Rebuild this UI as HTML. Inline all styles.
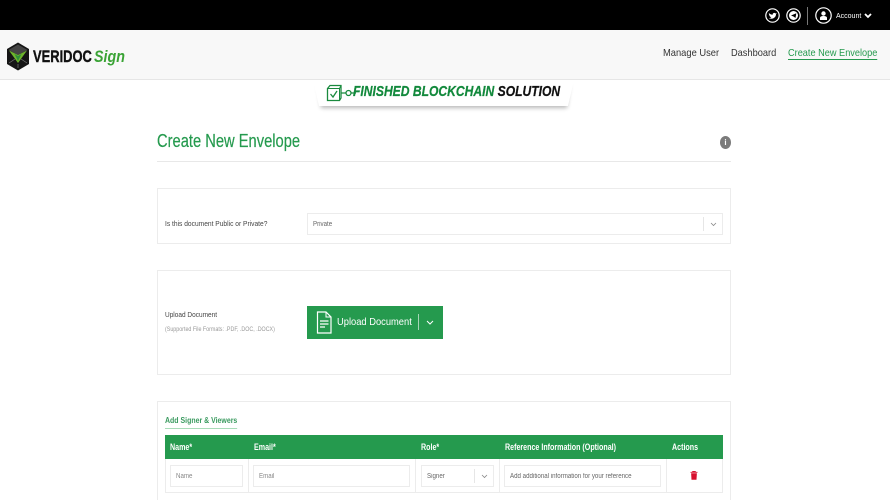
<!DOCTYPE html>
<html><head><meta charset="utf-8">
<style>
*{box-sizing:border-box}
html,body{margin:0;padding:0;width:890px;height:500px;overflow:hidden}
body{background:#fff;font-family:"Liberation Sans",sans-serif;color:#333}
#w{position:absolute;left:0;top:0;width:890px;height:500px;overflow:hidden}
.a{position:absolute;white-space:nowrap;transform-origin:0 0}
.box{position:absolute;border:1px solid #ececec;background:#fff}
.inp{position:absolute;border:1px solid #ececec;background:#fff}
.t{position:absolute;font-size:7px;line-height:10px;color:#666;white-space:nowrap;transform-origin:0 0;transform:scaleX(.88);margin-top:1px}
.th{position:absolute;top:436px;height:23px;line-height:22px;color:#fff;font-weight:bold;font-size:9px;white-space:nowrap;transform-origin:0 0;transform:scaleX(.79)}
</style></head><body><div id="w">
<div class="a" style="left:0;top:0;width:890px;height:30px;background:#000"></div>
<div class="a" style="left:0;top:30px;width:890px;height:50px;background:#f8f8f8;border-bottom:1px solid #e6e6e6"></div>

<svg class="a" style="left:765px;top:7px" width="110" height="18" viewBox="0 0 110 18">
<circle cx="7.5" cy="8.5" r="6.7" fill="none" stroke="#fff" stroke-width="1.2"/>
<path d="M3.8 6c1.6 1.3 2.7 1.7 3.8 1.7C7.6 6 9.600 5.300 10.600 6.500L11.800 6 11 7.300C11 10.500 7.500 13 3.800 11 5 11 5.800 10.700 6.300 10.200 5 10 4 8.500 3.800 6Z" fill="#fff"/>
<circle cx="28.500" cy="8.500" r="6.700" fill="none" stroke="#fff" stroke-width="1.200"/>
<circle cx="28.500" cy="8.500" r="4.500" fill="#fff"/>
<path d="M26 8.500 31.300 6.300 30.500 11 28.500 9.500Z" fill="#000"/>
<rect x="42" y="0" width="1" height="18" fill="#777"/>
<circle cx="58.500" cy="8.500" r="7.700" fill="none" stroke="#fff" stroke-width="1.200"/>
<circle cx="58.500" cy="6.500" r="2.200" fill="#fff"/>
<path d="M55 13V11C55 9.500 56.500 9 58.500 9S62 9.500 62 11V13Z" fill="#fff"/>
<path d="M100 7l3 3 3-3" fill="none" stroke="#fff" stroke-width="1.800"/>
</svg>
<div class="a" style="left:836px;top:13px;font-size:7px;line-height:8px;color:#fff">Account</div>

<svg class="a" style="left:6px;top:42px" width="24" height="29" viewBox="0 0 24 29">
<path d="M12 .5 23 7V22L12 28.500 1 22V7Z" fill="#161616"/>
<path d="M12 2.500 21.500 8 12 13 2.500 8Z" fill="#444"/>
<path d="M3 8.500 12 13 21 8.500 12 21Z" fill="#6fb52c"/>
<path d="M8.500 12 12 14 15.500 12 12 19Z" fill="#2f8f3a"/>
<path d="M3 21 9 17M21 21 15 17M12 26V22" stroke="#777" stroke-width=".7"/>
</svg>
<div class="a" style="left:33px;top:47px;font-size:17px;line-height:20px;font-weight:bold;color:#111;transform:scaleX(.76);-webkit-text-stroke:.4px #111">VERIDOC</div>
<div class="a" style="left:94px;top:47px;font-size:17px;line-height:20px;font-weight:bold;font-style:italic;color:#3aa335;transform:scaleX(.84)">Sign</div>

<div class="a" style="left:663px;top:47px;font-size:10.500px;line-height:12px;color:#333;transform:scaleX(.89)">Manage User</div>
<div class="a" style="left:731px;top:47px;font-size:10.500px;line-height:12px;color:#333;transform:scaleX(.88)">Dashboard</div>
<div class="a" style="left:788px;top:47px;font-size:10.500px;line-height:12px;color:#259a4e;border-bottom:1px solid #259a4e;transform:scaleX(.875)">Create New Envelope</div>

<svg class="a" style="left:310px;top:80px" width="270" height="34" viewBox="0 0 270 34">
<defs><filter id="s" x="-5%" y="-20%" width="110%" height="160%"><feGaussianBlur stdDeviation="2"/></filter></defs>
<path d="M8 4H260L257 28H11Z" fill="#000" opacity=".28" filter="url(#s)"/>
<path d="M3 0H264L258 26H9Z" fill="#fff"/>
</svg>
<svg class="a" style="left:326px;top:84px" width="32" height="18" viewBox="0 0 32 18">
<path d="M1.500 4.500 4 1.500H15V14L13.500 16.500H1.500Z" fill="none" stroke="#1a8a3e" stroke-width="1.300"/>
<path d="M1.500 4.500H13.500V16.500M13.500 4.500 15 1.500" fill="none" stroke="#1a8a3e" stroke-width="1"/>
<path d="M4.500 10 7 13 11 7" fill="none" stroke="#1a8a3e" stroke-width="1.300"/>
<path d="M15 9H20M25 9H30" stroke="#1a8a3e" stroke-width="1.300"/>
<circle cx="22.500" cy="9" r="2.500" fill="none" stroke="#1a8a3e" stroke-width="1.300"/>
</svg>
<div class="a" style="left:353px;top:84px;font-size:14.500px;line-height:17px;font-weight:bold;font-style:italic;color:#12893c;transform:scaleX(.835);-webkit-text-stroke:.25px">FINISHED BLOCKCHAIN <span style="color:#111">SOLUTION</span></div>

<div class="a" style="left:157px;top:130px;font-size:18.500px;line-height:21px;color:#259a4e;transform:scaleX(.795);-webkit-text-stroke:.2px #259a4e">Create New Envelope</div>
<div class="a" style="left:720px;top:136px;width:11px;height:13px;border-radius:50%;background:#7b7b7b;color:#fff;font-size:8px;font-weight:bold;line-height:13px;text-align:center">i</div>
<div class="a" style="left:157px;top:161px;width:574px;height:1px;background:#e8e8e8"></div>

<div class="box" style="left:157px;top:188px;width:574px;height:56px"></div>
<div class="a" style="left:165px;top:219px;font-size:7.500px;line-height:10px;color:#444;transform:scaleX(.887)">Is this document Public or Private?</div>
<div class="inp" style="left:307px;top:213px;width:416px;height:22px"></div>
<div class="t" style="left:313px;top:219px">Private</div>
<div class="a" style="left:703px;top:217px;width:1px;height:14px;background:#e6e6e6"></div>
<svg class="a" style="left:710px;top:222px" width="7" height="5"><path d="M1 1l2.500 2.500L6 1" fill="none" stroke="#888" stroke-width=".8"/></svg>

<div class="box" style="left:157px;top:270px;width:574px;height:105px"></div>
<div class="a" style="left:165px;top:310px;font-size:7.500px;line-height:10px;color:#444;transform:scaleX(.867)">Upload Document</div>
<div class="a" style="left:165px;top:325px;font-size:6.500px;line-height:10px;color:#999;transform:scaleX(.82)">(Supported File Formats: .PDF, .DOC, .DOCX)</div>
<div class="a" style="left:307px;top:306px;width:136px;height:33px;background:#259a4e"></div>
<svg class="a" style="left:316px;top:311px" width="16" height="23" viewBox="0 0 16 23">
<path d="M1.500 1H10L15 6V22H1.500Z" fill="none" stroke="#fff" stroke-width="1.200"/>
<path d="M10 1V6H15" fill="none" stroke="#fff" stroke-width="1"/>
<path d="M4 10H12.500M4 13H12.500M4 16H9" stroke="#fff" stroke-width="1.200"/>
</svg>
<div class="a" style="left:337px;top:315px;font-size:10.500px;line-height:14px;color:#fff;transform:scaleX(.89)">Upload Document</div>
<div class="a" style="left:418px;top:314px;width:1px;height:16px;background:#a5d6b5"></div>
<svg class="a" style="left:426px;top:320px" width="8" height="6"><path d="M1 1l3 3 3-3" fill="none" stroke="#fff" stroke-width="1"/></svg>

<div class="box" style="left:157px;top:401px;width:574px;height:110px"></div>
<div class="a" style="left:165px;top:414px;font-size:8.500px;line-height:12px;font-weight:bold;color:#3a9a5f;padding-bottom:2px;border-bottom:1px solid #a8dcb8;transform:scaleX(.82)">Add Signer &amp; Viewers</div>
<div class="a" style="left:165px;top:435px;width:558px;height:24px;background:#259a4e"></div>
<div class="th" style="left:170px">Name*</div>
<div class="th" style="left:254px">Email*</div>
<div class="th" style="left:421px">Role*</div>
<div class="th" style="left:505px">Reference Information (Optional)</div>
<div class="th" style="left:672px">Actions</div>

<div class="a" style="left:165px;top:459px;width:558px;height:34px;border:1px solid #ececec;border-top:0"></div>
<div class="a" style="left:248px;top:459px;width:1px;height:34px;background:#ececec"></div>
<div class="a" style="left:415px;top:459px;width:1px;height:34px;background:#ececec"></div>
<div class="a" style="left:499px;top:459px;width:1px;height:34px;background:#ececec"></div>
<div class="a" style="left:666px;top:459px;width:1px;height:34px;background:#ececec"></div>
<div class="inp" style="left:170px;top:465px;width:73px;height:22px"></div>
<div class="t" style="left:176px;top:471px;color:#888">Name</div>
<div class="inp" style="left:253px;top:465px;width:157px;height:22px"></div>
<div class="t" style="left:259px;top:471px;color:#888">Email</div>
<div class="inp" style="left:421px;top:465px;width:73px;height:22px"></div>
<div class="t" style="left:427px;top:471px">Signer</div>
<div class="a" style="left:474px;top:469px;width:1px;height:14px;background:#e6e6e6"></div>
<svg class="a" style="left:481px;top:474px" width="7" height="5"><path d="M1 1l2.500 2.500L6 1" fill="none" stroke="#888" stroke-width=".8"/></svg>
<div class="inp" style="left:504px;top:465px;width:157px;height:22px"></div>
<div class="t" style="left:510px;top:471px">Add additional information for your reference</div>
<svg class="a" style="left:690px;top:471px" width="8" height="9" viewBox="0 0 8 9">
<path d="M0.500 1.300H7.500M2.700 1.300V.4H5.300V1.300" fill="none" stroke="#d8112f" stroke-width=".9"/>
<path d="M1.100 2.200H6.900L6.500 8.800H1.500Z" fill="#d8112f"/>
</svg>
</div></body></html>
